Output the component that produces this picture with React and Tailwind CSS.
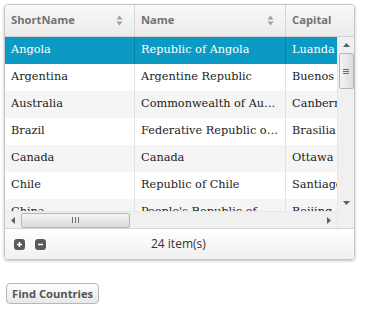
import { useState } from 'react'

const ROWS = [
  { short: 'Angola', name: 'Republic of Angola', capital: 'Luanda' },
  { short: 'Argentina', name: 'Argentine Republic', capital: 'Buenos Aires' },
  { short: 'Australia', name: 'Commonwealth of Australia', capital: 'Canberra' },
  { short: 'Brazil', name: 'Federative Republic of Brazil', capital: 'Brasilia' },
  { short: 'Canada', name: 'Canada', capital: 'Ottawa' },
  { short: 'Chile', name: 'Republic of Chile', capital: 'Santiago' },
  { short: 'China', name: "People's Republic of China", capital: 'Beijing' },
]

const sans = "font-['Open_Sans',sans-serif]"
const serif = "font-['DejaVu_Serif',serif]"

function SortIcon() {
  return (
    <svg width="7" height="11" viewBox="0 0 7 11" className="shrink-0">
      <path d="M3.5 0.5 L6.5 4.5 L0.5 4.5 Z" fill="#a0a0a0" />
      <path d="M3.5 10.5 L6.5 6.5 L0.5 6.5 Z" fill="#a0a0a0" />
    </svg>
  )
}

function HeaderCell({ title, width, sort, last }) {
  return (
    <div className={`${width} shrink-0 h-full flex items-center justify-between pl-[6px] pr-[11px] ${last ? '' : 'border-r border-[#d5d5d5]'}`}>
      <span className={`${sans} text-[11.2px] font-bold text-[#727272]`}>{title}</span>
      {sort && <SortIcon />}
    </div>
  )
}

function Row({ row, i, selected, onClick }) {
  const bg = selected ? 'bg-[#0b9ac4] text-white' : i % 2 === 0 ? 'bg-[#f5f5f5] text-[#222]' : 'bg-white text-[#222]'
  const cell = `shrink-0 h-full flex items-center px-[6px] ${serif} text-[11.3px]`
  return (
    <div onClick={onClick} className={`flex h-[27px] ${bg} cursor-default`}>
      <div className={`${cell} w-[130px] border-r ${selected ? 'border-[#0a7fa3]' : 'border-[#e2e2e2]'}`}>
        <span className="truncate">{row.short}</span>
      </div>
      <div className={`${cell} w-[151px] border-r ${selected ? 'border-[#0a7fa3]' : 'border-[#e2e2e2]'}`}>
        <span className="truncate">{row.name}</span>
      </div>
      <div className={`${cell} w-[110px]`}>
        <span className="truncate">{row.capital}</span>
      </div>
    </div>
  )
}

function Arrow({ dir }) {
  const d = {
    up: 'M0 4 L3.5 0 L7 4 Z',
    down: 'M0 0 L3.5 4 L7 0 Z',
    left: 'M4 0 L0 3.5 L4 7 Z',
    right: 'M0 0 L4 3.5 L0 7 Z',
  }[dir]
  const vertical = dir === 'up' || dir === 'down'
  return (
    <svg width={vertical ? 7 : 4} height={vertical ? 4 : 7} viewBox={vertical ? '0 0 7 4' : '0 0 4 7'}>
      <path d={d} fill="#606060" />
    </svg>
  )
}

export default function App() {
  const [selected, setSelected] = useState(0)

  return (
    <div className="w-[366px] h-[311px] bg-white pt-[4px] pl-[4px]">
      <div className="w-[351px] border border-[#c5c5c5] rounded-[4px] shadow-[0_1px_3px_rgba(0,0,0,0.25)] overflow-hidden">
        {/* header */}
        <div className="flex h-[32px] bg-gradient-to-b from-[#f9f9f9] to-[#ebebeb] border-b border-[#d0d0d0] overflow-hidden">
          <HeaderCell title="ShortName" width="w-[130px]" sort />
          <HeaderCell title="Name" width="w-[151px]" sort />
          <HeaderCell title="Capital" width="w-[110px]" last />
        </div>

        {/* body */}
        <div className="flex">
          <div className="w-[332px] shrink-0">
            <div className="h-[174px] overflow-hidden">
              <div className="w-[391px]">
                {ROWS.map((r, i) => (
                  <Row key={r.short} row={r} i={i} selected={selected === i} onClick={() => setSelected(i)} />
                ))}
              </div>
            </div>
            {/* horizontal scrollbar */}
            <div className="h-[17px] flex items-center bg-[#f0f0f0] border-t border-[#e6e6e6]">
              <div className="w-[16px] h-full flex items-center justify-center">
                <Arrow dir="left" />
              </div>
              <div className="w-[109px] h-[15px] rounded-[2px] border border-[#b5b5b5] bg-gradient-to-b from-[#f4f4f4] to-[#dcdcdc] flex items-center justify-center gap-[1px]">
                <span className="w-[1px] h-[6px] bg-[#6a6a6a]" />
                <span className="w-[1px] h-[6px] bg-[#6a6a6a] ml-[1px]" />
                <span className="w-[1px] h-[6px] bg-[#6a6a6a] ml-[1px]" />
              </div>
              <div className="flex-1" />
              <div className="w-[16px] h-full flex items-center justify-center">
                <Arrow dir="right" />
              </div>
            </div>
          </div>

          {/* vertical scrollbar */}
          <div className="w-[17px] shrink-0 flex flex-col bg-[#f0f0f0] border-l border-[#e6e6e6]">
            <div className="h-[174px] flex flex-col items-center">
              <div className="h-[16px] w-full flex items-center justify-center">
                <Arrow dir="up" />
              </div>
              <div className="w-[15px] h-[36px] rounded-[2px] border border-[#b5b5b5] bg-gradient-to-r from-[#f4f4f4] to-[#dcdcdc] flex flex-col items-center justify-center">
                <span className="w-[6px] h-[1px] bg-[#6a6a6a]" />
                <span className="w-[6px] h-[1px] bg-[#6a6a6a] mt-[1px]" />
                <span className="w-[6px] h-[1px] bg-[#6a6a6a] mt-[1px]" />
              </div>
              <div className="flex-1" />
              <div className="h-[16px] w-full flex items-center justify-center">
                <Arrow dir="down" />
              </div>
            </div>
            <div className="h-[17px] bg-[#f0f0f0]" />
          </div>
        </div>

        {/* footer */}
        <div className="h-[31px] flex items-center border-t border-[#d5d5d5] bg-gradient-to-b from-white to-[#f0f0f0] pl-[9px]">
          <button className="w-[11px] h-[11px] rounded-[3px] bg-[#5a5a5a] flex items-center justify-center">
            <svg width="7" height="7" viewBox="0 0 7 7"><path d="M3.5 1 V6 M1 3.5 H6" stroke="white" strokeWidth="1.6" /></svg>
          </button>
          <button className="w-[11px] h-[11px] rounded-[3px] bg-[#5a5a5a] flex items-center justify-center ml-[10px]">
            <svg width="7" height="7" viewBox="0 0 7 7"><path d="M1 3.5 H6" stroke="white" strokeWidth="1.6" /></svg>
          </button>
          <span className={`${sans} text-[12px] text-[#333] ml-[105px]`}>24 item(s)</span>
        </div>
      </div>

      <button className={`mt-[23px] ml-[2px] h-[21px] px-[5px] rounded-[4px] border border-[#b8b8b8] bg-gradient-to-b from-white to-[#e8e8e8] ${sans} text-[11.2px] font-bold text-[#555] leading-none`}>
        Find Countries
      </button>
    </div>
  )
}
